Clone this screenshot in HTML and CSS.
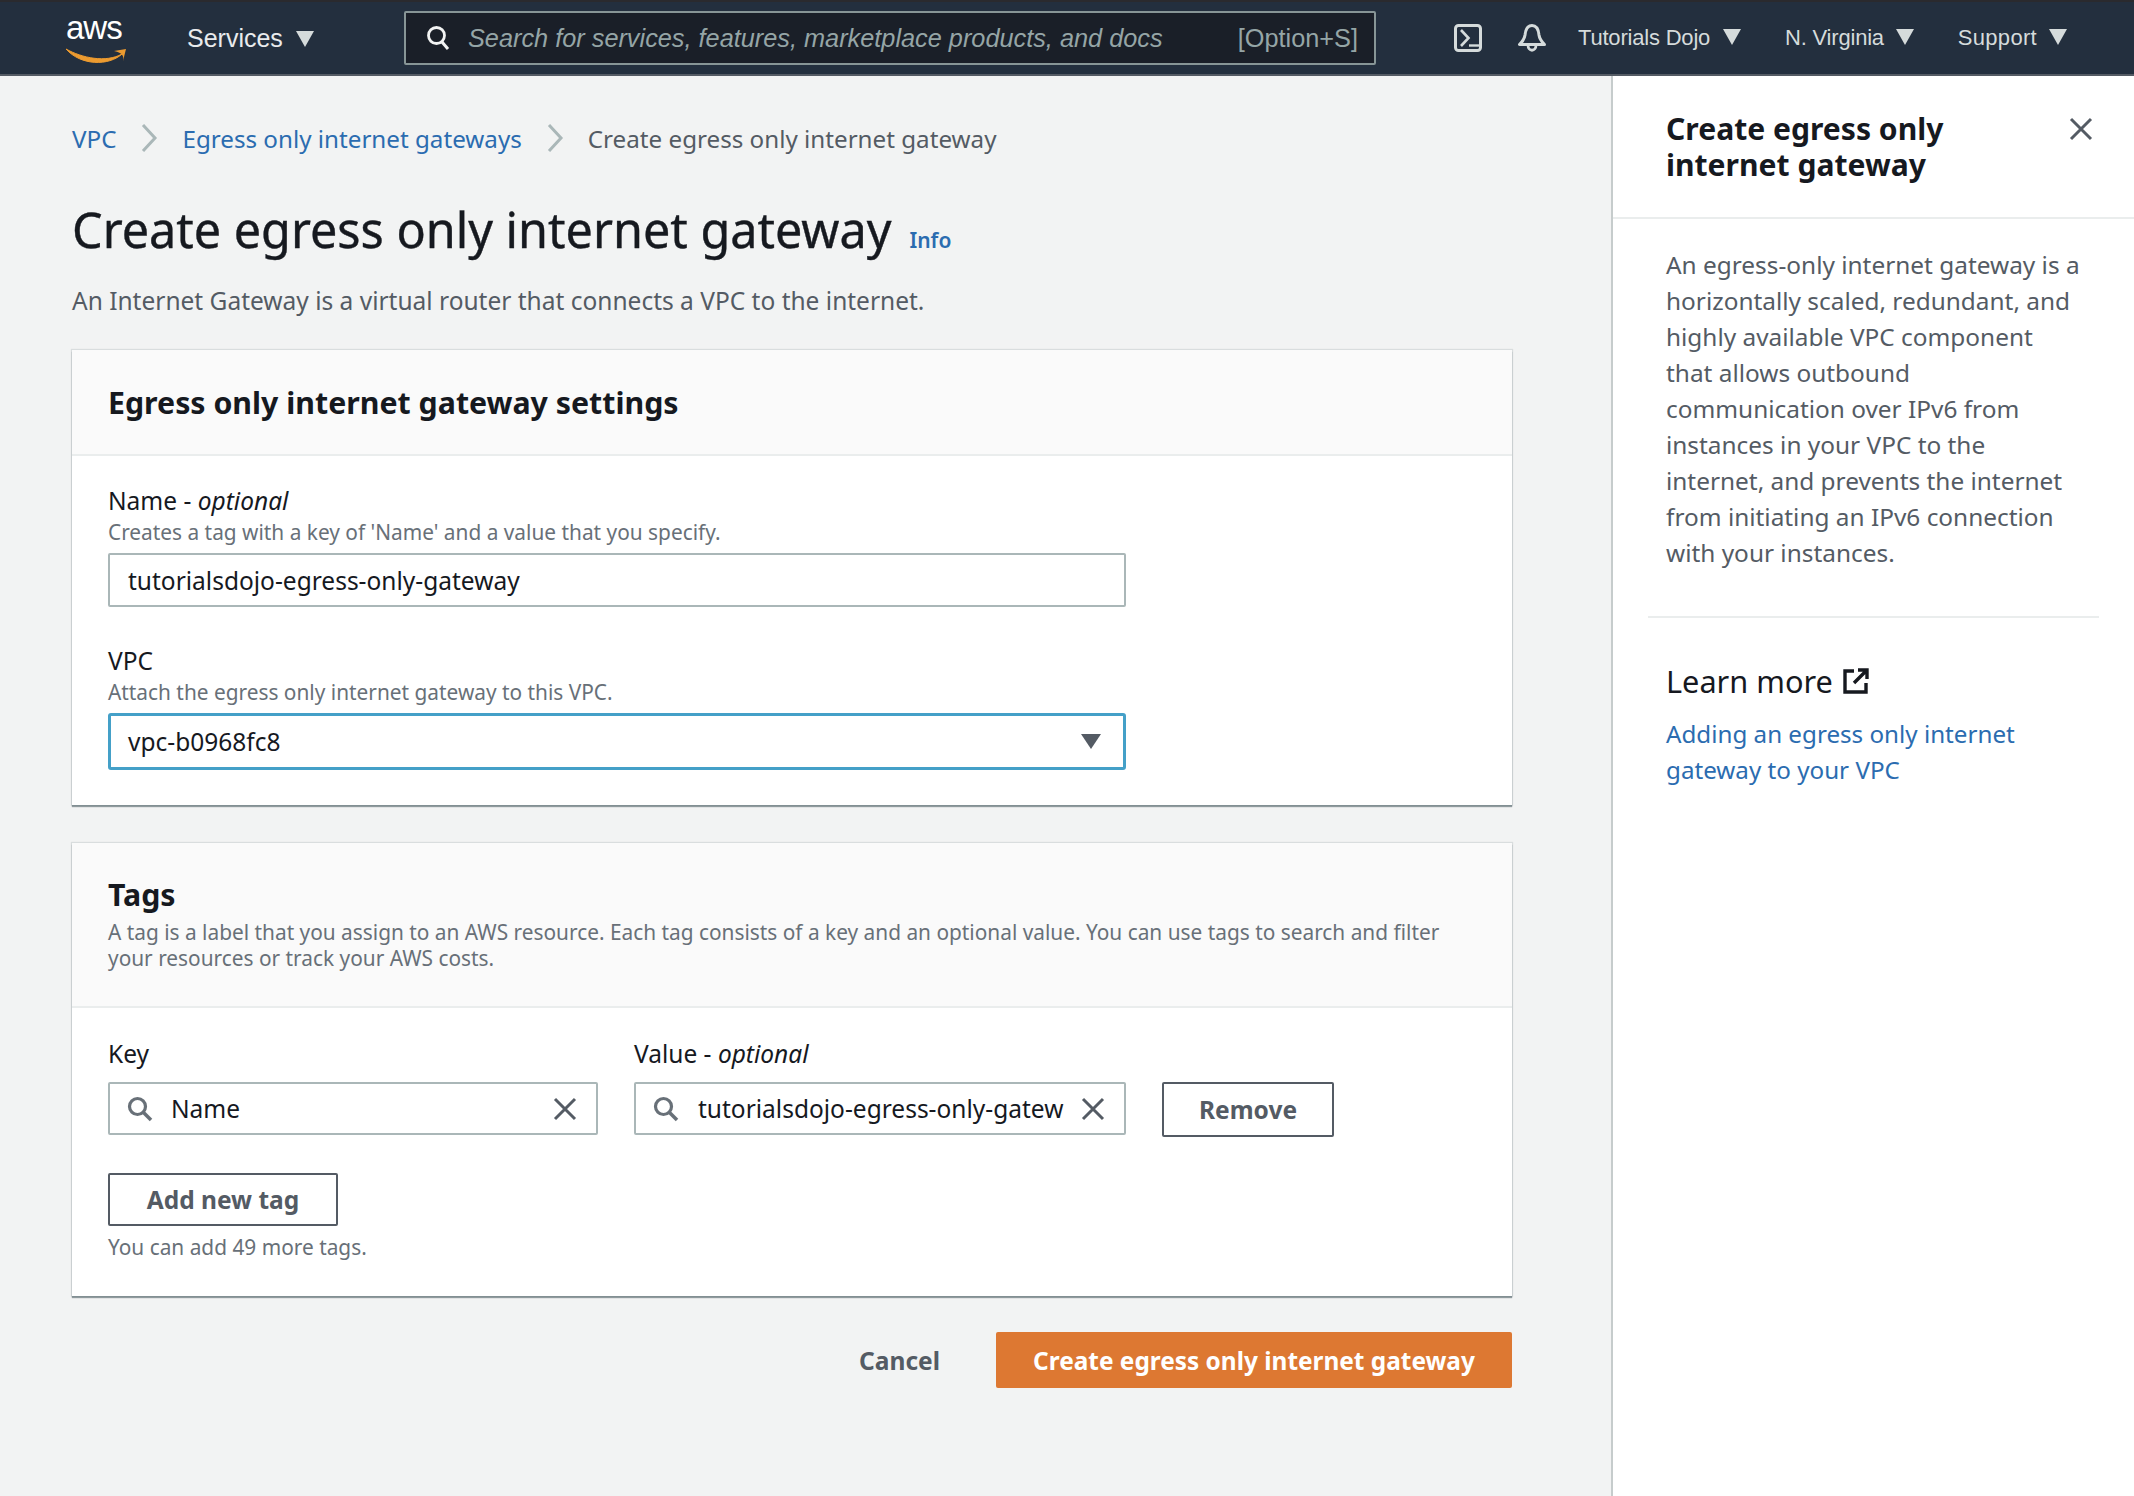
FILE: index.html
```html
<!DOCTYPE html>
<html>
<head>
    <title>Create egress only internet gateway</title>
    <link rel="stylesheet" href="styles.css">
</head>
<body>
    <nav class="topnav">
        <div class="logo">
            <span class="logo-text">aws</span>
            <svg class="logo-smile" viewBox="0 0 64 18" width="64" height="18">
                <path d="M1 2C17 11 41 16 57 7C44 19 16 19 1 2Z" fill="#ec9b30" stroke="#ec9b30" stroke-width="1"/>
                <path d="M49 4L61 2L58 14C59 9 58 6 49 4Z" fill="#ec9b30"/>
            </svg>
        </div>
        <div class="nav-services">Services <span class="caret"></span></div>
        <div class="nav-search">
            <svg class="search-icon" viewBox="0 0 24 26" width="24" height="26">
                <circle cx="10.500" cy="10.500" r="8" fill="none" stroke="#f2f3f3" stroke-width="2.800"/>
                <path d="M16 17L22 24" stroke="#f2f3f3" stroke-width="3"/>
            </svg>
            <span class="search-text">Search for services, features, marketplace products, and docs</span>
            <span class="search-key">[Option+S]</span>
        </div>
        <svg class="nav-icon cloudshell" viewBox="0 0 28 28" width="28" height="28">
            <rect x="1.500" y="1.500" width="25" height="25" rx="3" fill="none" stroke="#d5dbdb" stroke-width="3"/>
            <path d="M7 6L14.500 14L7 22" fill="none" stroke="#d5dbdb" stroke-width="2.600"/>
            <path d="M15 21.500H27" stroke="#d5dbdb" stroke-width="2.400"/>
        </svg>
        <svg class="nav-icon bell" viewBox="0 0 28 28" width="28" height="28">
            <path d="M14 1.500C9 1.500 7.500 6 7 11C6.500 15 4 18 1.500 20.500H26.500C24 18 21.500 15 21 11C20.500 6 19 1.500 14 1.500Z" fill="none" stroke="#d5dbdb" stroke-width="3" stroke-linejoin="round"/>
            <path d="M10 21C10 28 18 28 18 21" fill="none" stroke="#d5dbdb" stroke-width="2.800"/>
        </svg>
        <div class="nav-item nav-user">Tutorials Dojo <span class="caret"></span></div>
        <div class="nav-item nav-region">N. Virginia <span class="caret"></span></div>
        <div class="nav-item nav-support">Support <span class="caret"></span></div>
    </nav>

    <div class="page">
        <main class="content">
            <div class="breadcrumb">
                <a class="link">VPC</a>
                <svg class="crumb-sep" viewBox="0 0 18 28" width="18" height="28"><path d="M3 1L15 14L3 27" fill="none" stroke="#aab7b8" stroke-width="3"/></svg>
                <a class="link">Egress only internet gateways</a>
                <svg class="crumb-sep" viewBox="0 0 18 28" width="18" height="28"><path d="M3 1L15 14L3 27" fill="none" stroke="#aab7b8" stroke-width="3"/></svg>
                <span class="crumb-current">Create egress only internet gateway</span>
            </div>

            <div class="title-row">
                <h1>Create egress only internet gateway</h1>
                <a class="info">Info</a>
            </div>
            <p class="subtitle">An Internet Gateway is a virtual router that connects a VPC to the internet.</p>

            <section class="card">
                <div class="card-header settings-header">
                    <h2>Egress only internet gateway settings</h2>
                </div>
                <div class="card-body settings-body">
                    <div class="form-group">
                        <div class="label">Name - <em>optional</em></div>
                        <div class="hint">Creates a tag with a key of 'Name' and a value that you specify.</div>
                        <div class="input wide">tutorialsdojo-egress-only-gateway</div>
                    </div>
                    <div class="form-group second">
                        <div class="label">VPC</div>
                        <div class="hint">Attach the egress only internet gateway to this VPC.</div>
                        <div class="input wide select">
                            <span>vpc-b0968fc8</span>
                            <span class="select-caret"></span>
                        </div>
                    </div>
                </div>
            </section>

            <section class="card tags-card">
                <div class="card-header tags-header">
                    <h2>Tags</h2>
                    <p class="hint tags-hint">A tag is a label that you assign to an AWS resource. Each tag consists of a key and an optional value. You can use tags to search and filter your resources or track your AWS costs.</p>
                </div>
                <div class="card-body tags-body">
                    <div class="tag-row">
                        <div class="tag-col key-col">
                            <div class="label">Key</div>
                            <div class="input tag-input">
                                <svg class="tag-search" viewBox="0 0 26 26" width="26" height="26"><circle cx="10.500" cy="10.500" r="8" fill="none" stroke="#687078" stroke-width="3.200"/><path d="M16 16L24 24" stroke="#687078" stroke-width="3.600"/></svg>
                                <span class="tag-value">Name</span>
                                <svg class="tag-clear" viewBox="0 0 24 24" width="24" height="24"><path d="M2 2L22 22M22 2L2 22" stroke="#545b64" stroke-width="3"/></svg>
                            </div>
                        </div>
                        <div class="tag-col value-col">
                            <div class="label">Value - <em>optional</em></div>
                            <div class="input tag-input">
                                <svg class="tag-search" viewBox="0 0 26 26" width="26" height="26"><circle cx="10.500" cy="10.500" r="8" fill="none" stroke="#687078" stroke-width="3.200"/><path d="M16 16L24 24" stroke="#687078" stroke-width="3.600"/></svg>
                                <span class="tag-value">tutorialsdojo-egress-only-gatew</span>
                                <svg class="tag-clear" viewBox="0 0 24 24" width="24" height="24"><path d="M2 2L22 22M22 2L2 22" stroke="#545b64" stroke-width="3"/></svg>
                            </div>
                        </div>
                        <button class="btn remove-btn">Remove</button>
                    </div>
                    <button class="btn add-btn">Add new tag</button>
                    <div class="hint tags-left">You can add 49 more tags.</div>
                </div>
            </section>

            <div class="actions">
                <button class="cancel-btn">Cancel</button>
                <button class="primary-btn">Create egress only internet gateway</button>
            </div>
        </main>

        <aside class="help-panel">
            <div class="panel-header">
                <h3>Create egress only internet gateway</h3>
                <svg class="panel-close" viewBox="0 0 24 24" width="24" height="24"><path d="M2 2L22 22M22 2L2 22" stroke="#545b64" stroke-width="3"/></svg>
            </div>
            <div class="panel-body">
                <p class="panel-text">An egress-only internet gateway is a horizontally scaled, redundant, and highly available VPC component that allows outbound communication over IPv6 from instances in your VPC to the internet, and prevents the internet from initiating an IPv6 connection with your instances.</p>
                <div class="panel-divider"></div>
                <div class="learn-more">
                    <span>Learn more</span>
                    <svg viewBox="0 0 26 26" width="26" height="26">
                        <path d="M11 3H2V24H23V15" fill="none" stroke="#16191f" stroke-width="3.400"/>
                        <path d="M15 2H24V11M24 2L11 15" fill="none" stroke="#16191f" stroke-width="3.400"/>
                    </svg>
                </div>
                <a class="link panel-link">Adding an egress only internet gateway to your VPC</a>
            </div>
        </aside>
    </div>
</body>
</html>
```

FILE: styles.css
```css
* {
    box-sizing: border-box;
}
html, body {
    height: 100%;
}
body {
    margin: 0;
    width: 2134px;
    height: 1496px;
    overflow: hidden;
    display: flex;
    flex-direction: column;
    background-color: #f2f3f3;
    color: #16191f;
    font-family: "Noto Sans", sans-serif;
    font-size: 24.500px;
}
h1, h2, h3, p {
    margin: 0;
}
.link {
    color: #2b6cb0;
}

/* top bar */
.topnav {
    height: 76px;
    flex: none;
    display: flex;
    align-items: center;
    padding-left: 65px;
    background-color: #232f3e;
    border-top: 2px solid #2a2a2e;
    border-bottom: 2px solid #545b64;
    font-family: "Liberation Sans", sans-serif;
    font-size: 22px;
    color: #d5dbdb;
}
.logo {
    width: 66px;
    height: 56px;
    position: relative;
    flex: none;
}
.logo-text {
    position: absolute;
    left: 1px;
    top: -1px;
    font-size: 33px;
    color: #fff;
    letter-spacing: -1px;
}
.logo-smile {
    position: absolute;
    left: 0;
    top: 37px;
}
.nav-services {
    margin-left: 56px;
    width: 217px;
    font-size: 25px;
    color: #e9ebed;
}
.caret {
    display: inline-block;
    margin-left: 6px;
    width: 0;
    height: 0;
    border-left: 9px solid transparent;
    border-right: 9px solid transparent;
    border-top: 16px solid #d5dbdb;
}
.nav-search {
    width: 972px;
    height: 54px;
    flex: none;
    display: flex;
    align-items: center;
    padding: 0 16px 0 20px;
    background-color: #1a1f28;
    border: 2px solid #879596;
    border-radius: 2px;
    font-size: 25.300px;
    color: #95a5a6;
}
.search-text {
    margin-left: 18px;
    font-style: italic;
    flex: 1;
    white-space: nowrap;
}
.nav-icon {
    flex: none;
}
.cloudshell {
    margin-left: 78px;
}
.bell {
    margin-left: 36px;
}
.nav-item {
    white-space: nowrap;
    letter-spacing: -0.2px;
}
.nav-user {
    margin-left: 32px;
}
.nav-user .caret {
    margin-left: 7px;
}
.nav-region {
    margin-left: 44px;
}
.nav-support {
    margin-left: 44px;
    letter-spacing: 0.3px;
}

/* page */
.page {
    flex: 1;
    display: flex;
    min-height: 0;
}
.content {
    width: 1611px;
    flex: none;
    padding: 44px 99px 0 72px;
}
.breadcrumb {
    height: 36px;
    display: flex;
    align-items: center;
    gap: 24px;
    white-space: nowrap;
    font-size: 24.200px;
}
.crumb-current {
    color: #545b64;
}
.title-row {
    margin-top: 39px;
    display: flex;
    align-items: baseline;
    gap: 18px;
}
h1 {
    font-size: 48.500px;
    line-height: 68px;
    font-weight: 400;
    -webkit-text-stroke: 0.4px #16191f;
}
.info {
    font-size: 21px;
    font-weight: 600;
    color: #2b6cb0;
}
.subtitle {
    margin-top: 20px;
    line-height: 36px;
    color: #545b64;
}

/* cards */
.card {
    margin-top: 31px;
    background-color: #fff;
    box-shadow: 0 2px 1px rgba(0, 28, 36, 0.4), 0 0 1px 1px rgba(0, 28, 36, 0.1);
}
.tags-card {
    margin-top: 38px;
}
.card-header {
    background-color: #fafafa;
    border-bottom: 2px solid #eaeded;
    padding: 0 36px;
}
.settings-header {
    height: 106px;
    display: flex;
    align-items: center;
}
h2 {
    font-size: 30.300px;
    font-weight: 700;
}
.card-body {
    padding: 0 36px;
}
.settings-body {
    padding-top: 26px;
    height: 349px;
}
.label {
    line-height: 37px;
}
.hint {
    font-size: 20.850px;
    line-height: 26px;
    color: #687078;
}
.input {
    margin-top: 8px;
    height: 54px;
    display: flex;
    align-items: center;
    background-color: #fff;
    border: 2px solid #aab7b8;
    border-radius: 2px;
    padding: 0 18px;
    white-space: nowrap;
}
.wide {
    width: 1018px;
}
.second {
    margin-top: 35px;
}
.select {
    justify-content: space-between;
    height: 57px;
    border: 3px solid #44a0c8;
    border-radius: 3px;
    padding: 0 22px 0 17px;
}
.select-caret {
    width: 0;
    height: 0;
    border-left: 10px solid transparent;
    border-right: 10px solid transparent;
    border-top: 15px solid #545b64;
}
.tags-header {
    height: 165px;
    padding-top: 31px;
}
.tags-hint {
    margin-top: 4px;
}
.tags-body {
    padding-top: 27px;
    height: 288px;
}
.tag-row {
    display: flex;
    align-items: flex-end;
    gap: 36px;
}
.tag-col .input {
    margin-top: 10px;
    height: 53px;
}
.key-col {
    width: 490px;
}
.value-col {
    width: 492px;
}
.tag-input {
    padding: 0 19px 0 17px;
    gap: 18px;
}
.value-col .tag-search {
    margin-right: 1px;
}
.tag-search, .tag-clear {
    flex: none;
}
.tag-value {
    flex: 1;
    min-width: 0;
}
.btn {
    background-color: #fff;
    border: 2px solid #545b64;
    border-radius: 2px;
    font-family: "Noto Sans", sans-serif;
    font-size: 24.500px;
    font-weight: 700;
    color: #545b64;
}
.remove-btn {
    width: 172px;
    height: 55px;
    margin-bottom: -2px;
}
.add-btn {
    display: block;
    margin-top: 38px;
    width: 230px;
    height: 53px;
}
.tags-left {
    margin-top: 8px;
}

/* bottom buttons */
.actions {
    margin-top: 36px;
    display: flex;
    justify-content: flex-end;
    align-items: center;
    gap: 50px;
}
.cancel-btn {
    background: none;
    border: none;
    font-family: "Noto Sans", sans-serif;
    font-size: 24.500px;
    font-weight: 700;
    color: #545b64;
}
.primary-btn {
    width: 516px;
    height: 56px;
    background-color: #dd7832;
    border: none;
    border-radius: 2px;
    font-family: "Noto Sans", sans-serif;
    font-size: 24.400px;
    font-weight: 700;
    color: #fff;
}

/* help panel */
.help-panel {
    flex: 1;
    background-color: #fff;
    border-left: 2px solid #c6cccc;
}
.panel-header {
    height: 143px;
    padding: 35px 41px 0 53px;
    display: flex;
    justify-content: space-between;
    border-bottom: 2px solid #eaeded;
}
h3 {
    width: 330px;
    font-size: 30.100px;
    line-height: 36px;
    font-weight: 700;
}
.panel-close {
    margin-top: 6px;
}
.panel-body {
    padding: 28px 35px 0;
}
.panel-text {
    width: 434px;
    padding-left: 18px;
    line-height: 36px;
    font-size: 24.400px;
    color: #545b64;
}
.panel-divider {
    margin-top: 45px;
    height: 2px;
    background-color: #eaeded;
}
.learn-more {
    margin-top: 43px;
    padding-left: 18px;
    display: flex;
    align-items: center;
    gap: 10px;
    font-size: 30.700px;
    line-height: 40px;
}
.panel-link {
    display: block;
    margin-top: 15px;
    padding-left: 18px;
    line-height: 36px;
    font-size: 24.200px;
}
```
